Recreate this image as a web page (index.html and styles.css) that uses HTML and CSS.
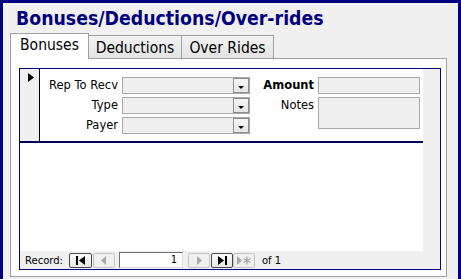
FILE: index.html
```html
<!DOCTYPE html>
<html lang="en">
<head>
    <meta charset="UTF-8">
    <title>Bonuses/Deductions/Over-rides</title>
    <link rel="stylesheet" href="styles.css">
</head>
<body>
    <div class="window">
        <h1 class="title">Bonuses/Deductions/Over-rides</h1>

        <div class="tabs">
            <div class="tab active">Bonuses</div>
            <div class="tab">Deductions</div>
            <div class="tab">Over Rides</div>
        </div>

        <div class="panel">
            <div class="subform">
                <div class="sub-body">
                    <div class="sub-main">
                        <div class="record">
                            <div class="selector">
                                <svg class="pointer" width="6" height="9" viewBox="0 0 6 9"><polygon points="0,0 6,4.5 0,9" fill="#000"/></svg>
                            </div>
                            <div class="fields">
                                <label class="lbl">Rep To Recv</label>
                                <div class="combo"><span class="combo-btn"><span class="arrow"></span></span></div>
                                <label class="lbl bold">Amount</label>
                                <div class="textbox"></div>

                                <label class="lbl">Type</label>
                                <div class="combo"><span class="combo-btn"><span class="arrow"></span></span></div>
                                <label class="lbl">Notes</label>
                                <div class="textbox notes"></div>

                                <label class="lbl">Payer</label>
                                <div class="combo"><span class="combo-btn"><span class="arrow"></span></span></div>
                            </div>
                        </div>
                        <div class="blank"></div>
                    </div>
                    <div class="vstrip"></div>
                </div>

                <div class="navbar">
                    <span class="nav-label">Record:</span>
                    <span class="nav-btn first">
                        <svg width="11" height="9" viewBox="0 0 11 9"><rect x="1" y="0" width="2" height="9" fill="#000"/><polygon points="10,0 4,4.5 10,9" fill="#000"/></svg>
                    </span>
                    <span class="nav-btn off prev">
                        <svg width="6" height="9" viewBox="0 0 6 9"><polygon points="5,0 0,4.5 5,9" fill="#a8a8a8"/></svg>
                    </span>
                    <span class="nav-input">1</span>
                    <span class="nav-btn off next">
                        <svg width="6" height="9" viewBox="0 0 6 9"><polygon points="1,0 6,4.5 1,9" fill="#a8a8a8"/></svg>
                    </span>
                    <span class="nav-btn last">
                        <svg width="11" height="9" viewBox="0 0 11 9"><polygon points="1,0 7,4.5 1,9" fill="#000"/><rect x="8" y="0" width="2" height="9" fill="#000"/></svg>
                    </span>
                    <span class="nav-btn off new">
                        <svg width="15" height="9" viewBox="0 0 15 9"><polygon points="0,0 5,4.5 0,9" fill="#a8a8a8"/><path d="M10 0.5v8M6.5 2.5l7 4M6.5 6.5l7-4" stroke="#a8a8a8" stroke-width="1.2"/></svg>
                    </span>
                    <span class="nav-of">of 1</span>
                </div>
            </div>
        </div>
    </div>
</body>
</html>
```

FILE: styles.css
```css
html, body {
    margin: 0;
    padding: 0;
    overflow: hidden;
}

body {
    font-family: "DejaVu Sans", sans-serif;
    background-color: #f0f0f0;
}

.window {
    width: 455px;
    height: 300px;
    border: 3px solid #000080;
    background-color: #f0f0f0;
}

.title {
    margin: 0 0 1px 0;
    padding: 3px 0 0 13px;
    font-size: 19.3px;
    font-stretch: condensed;
    line-height: 26px;
    font-weight: bold;
    color: #000080;
}

/* tab strip */
.tabs {
    display: flex;
    align-items: flex-end;
    height: 25px;
    margin-left: 7px;
}

.tab {
    box-sizing: border-box;
    height: 23px;
    font-size: 15.5px;
    font-stretch: condensed;
    line-height: 24px;
    text-align: center;
    color: #000;
    border-top: 1px solid #a0a0a0;
    border-right: 1px solid #a0a0a0;
    background: linear-gradient(#f3f3f3, #e3e3e3);
}

.tab.active {
    position: relative;
    z-index: 1;
    width: 79px;
    height: 26px;
    margin-bottom: -1px;
    line-height: 22px;
    border-left: 1px solid #a0a0a0;
    background: #fff;
}

.tab:nth-child(2) {
    width: 93px;
}

.tab:nth-child(3) {
    width: 92px;
}

.panel {
    box-sizing: border-box;
    width: 437px;
    height: 219px;
    margin-left: 7px;
    padding: 9px 5px 6px 8px;
    border: 1px solid #a0a0a0;
    background-color: #fff;
}

/* subform */
.subform {
    width: 420px;
    height: 200px;
    border: 1px solid #000080;
}

.sub-body {
    display: flex;
    height: 182px;
}

.sub-main {
    width: 403px;
    display: flex;
    flex-direction: column;
}

.vstrip {
    width: 17px;
    background-color: #f0f0f0;
}

.record {
    display: flex;
    height: 72px;
    border-bottom: 2px solid #000050;
}

.selector {
    box-sizing: border-box;
    width: 20px;
    padding: 4px 0 0 8px;
    border-right: 1px solid #000;
    background-color: #f0f0f0;
}

.pointer {
    display: block;
}

.fields {
    flex: 1;
    display: grid;
    grid-template-columns: 78px 128px 60px 102px;
    grid-template-rows: 17px 17px 17px;
    column-gap: 4px;
    row-gap: 3px;
    padding-top: 8px;
    background-color: #fff;
    font-size: 11.5px;
}

.lbl {
    text-align: right;
    line-height: 17px;
    color: #000;
    white-space: nowrap;
}

.lbl.bold {
    font-weight: bold;
}

.combo {
    display: flex;
    justify-content: flex-end;
    box-sizing: border-box;
    border: 1px solid #a9a9a9;
    background-color: #efefef;
}

.combo-btn {
    display: flex;
    align-items: center;
    justify-content: center;
    box-sizing: border-box;
    width: 16px;
    border: 1px solid #8c8c8c;
    background: linear-gradient(#f6f6f6, #e6e6e6);
}

.arrow {
    width: 0;
    height: 0;
    margin-top: 3px;
    border-left: 3px solid transparent;
    border-right: 3px solid transparent;
    border-top: 3px solid #000;
}

.textbox {
    box-sizing: border-box;
    border: 1px solid #a9a9a9;
    background-color: #efefef;
}

.textbox.notes {
    grid-column: 4;
    grid-row: 2 / span 2;
    height: 32px;
}

.blank {
    flex: 1;
    background-color: #fff;
}

/* record navigation */
.navbar {
    display: flex;
    align-items: center;
    height: 18px;
    background-color: #f0f0f0;
    font-size: 10px;
    color: #000;
}

.nav-label {
    width: 44px;
    padding-left: 5px;
}

.nav-btn {
    box-sizing: border-box;
    display: flex;
    align-items: center;
    justify-content: center;
    width: 23px;
    height: 15px;
    border: 1px solid #4a4a4a;
    border-radius: 2px;
    background: linear-gradient(#fafafa, #e8e8e8);
}

.nav-btn.off {
    width: 22px;
    border-color: #c4c4c4;
    background: #f0f0f0;
}

.nav-btn.prev {
    margin-left: 1px;
}

.nav-btn.next {
    margin-left: 5px;
}

.nav-btn.last {
    width: 22px;
    margin-left: 1px;
}

.nav-input {
    box-sizing: border-box;
    width: 64px;
    height: 16px;
    margin-left: 4px;
    padding-right: 5px;
    text-align: right;
    line-height: 14px;
    border-top: 1px solid #6d6d6d;
    border-left: 1px solid #6d6d6d;
    border-right: 1px solid #dcdcdc;
    border-bottom: 1px solid #dcdcdc;
    background-color: #fff;
}

.nav-of {
    margin-left: 7px;
}
```
